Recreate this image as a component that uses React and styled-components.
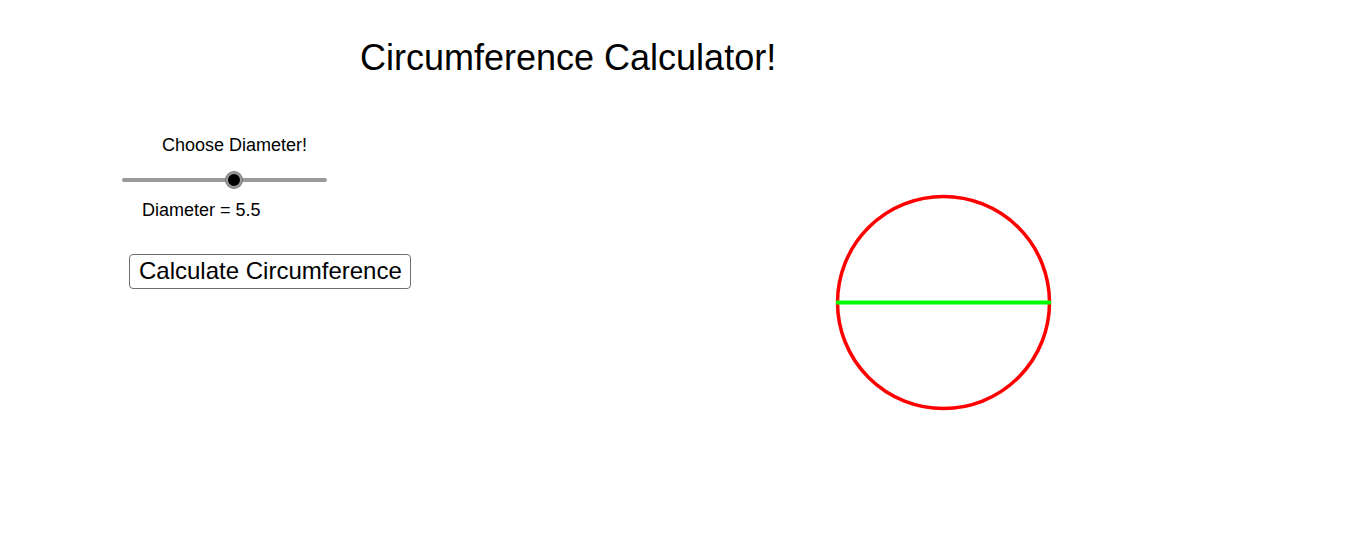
import React from 'react';
import styled, { createGlobalStyle } from 'styled-components';

const GlobalStyle = createGlobalStyle`
    html, body {
        margin: 0;
        padding: 0;
        background: #ffffff;
    }
    body {
        font-family: "Liberation Sans", Arial, sans-serif;
        color: #000000;
    }
`;

const Page = styled.div`
    width: 1357px;
    height: 547px;
    display: flex;
    flex-direction: column;
    background: #ffffff;
    overflow: hidden;
`;

const Header = styled.div`
    padding-top: 37px;
    padding-left: 360px;
`;

const Title = styled.h1`
    margin: 0;
    font-size: 36px;
    line-height: 41px;
    font-weight: normal;
`;

const Main = styled.div`
    display: flex;
    flex-direction: row;
`;

const Controls = styled.div`
    flex: 0 0 833px;
    padding-top: 57px;
    padding-left: 122px;
    box-sizing: border-box;
    display: flex;
    flex-direction: column;
    align-items: flex-start;
`;

const Caption = styled.div`
    font-size: 18px;
    line-height: 21px;
    margin-left: ${ p => p.indent }px;
    margin-top: ${ p => p.gap || 0 }px;
`;

const SliderRow = styled.div`
    position: relative;
    width: 205px;
    height: 20px;
    margin-top: 14px;
    display: flex;
    align-items: center;
`;

const Track = styled.div`
    width: 100%;
    height: 4px;
    border-radius: 2px;
    background: #999999;
`;

const Knob = styled.div`
    position: absolute;
    top: 50%;
    width: 12px;
    height: 12px;
    margin-left: -8px;
    margin-top: -8px;
    border-radius: 50%;
    background: #000000;
    border: 2px solid #9a9a9a;
    box-shadow: 0 0 0 1px #7a7a7a;
`;

const Button = styled.button`
    margin-top: 33px;
    margin-left: 7px;
    padding: 2px 8px 3px 9px;
    font-family: "Liberation Sans", Arial, sans-serif;
    font-size: 24px;
    line-height: 28px;
    color: #000000;
    background: #ffffff;
    border: 1px solid #6e6e6e;
    border-radius: 4px;
    cursor: pointer;
`;

const Figure = styled.svg`
    margin-top: 115px;
    flex: 0 0 auto;
`;

const DiameterSlider = ({ value, min, max }) => {
    const pct = (value - min) / (max - min);
    return (
        <SliderRow>
            <Track />
            <Knob style={{ left: `${ pct * 100 }%` }} />
        </SliderRow>
    );
};

export default function App() {
    const diameter = 5.5;
    return (
        <>
            <GlobalStyle />
            <Page>
                <Header>
                    <Title>Circumference Calculator!</Title>
                </Header>
                <Main>
                    <Controls>
                        <Caption indent={ 40 }>Choose Diameter!</Caption>
                        <DiameterSlider value={ diameter } min={ 0 } max={ 10.1 } />
                        <Caption indent={ 20 } gap={ 10 }>Diameter = { diameter }</Caption>
                        <Button>Calculate Circumference</Button>
                    </Controls>
                    <Figure width="222" height="222" viewBox="0 0 222 222">
                        <circle cx="110.5" cy="109.5" r="106" fill="none" stroke="#ff0000" strokeWidth="3.5" />
                        <line x1="3" y1="109.5" x2="218" y2="109.5" stroke="#00ff00" strokeWidth="4" />
                    </Figure>
                </Main>
            </Page>
        </>
    );
}
